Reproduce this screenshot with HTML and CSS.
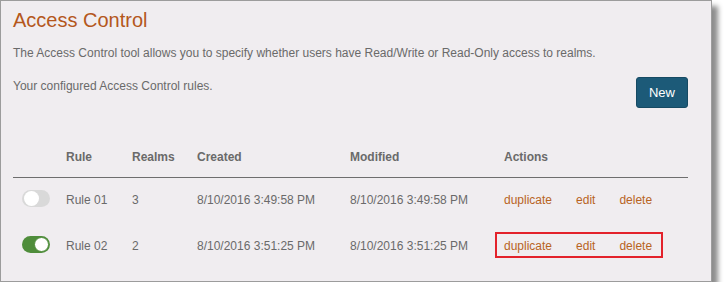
FILE: index.html
```html
<!DOCTYPE html>
<html lang="en">
<head>
  <meta charset="UTF-8">
  <title>Access Control</title>
  <link rel="stylesheet" href="styles.css">
</head>
<body>
  <div class="panel">
    <h1>Access Control</h1>
    <p class="intro">The Access Control tool allows you to specify whether users have Read/Write or Read-Only access to realms.</p>
    <div class="toolbar">
      <p>Your configured Access Control rules.</p>
      <button class="btn-new">New</button>
    </div>

    <div class="rules">
      <div class="row head">
        <div></div>
        <div>Rule</div>
        <div>Realms</div>
        <div>Created</div>
        <div>Modified</div>
        <div>Actions</div>
      </div>
      <div class="row">
        <div><span class="toggle"></span></div>
        <div>Rule 01</div>
        <div>3</div>
        <div>8/10/2016 3:49:58 PM</div>
        <div>8/10/2016 3:49:58 PM</div>
        <div class="actions">
          <a href="#">duplicate</a>
          <a href="#">edit</a>
          <a href="#">delete</a>
        </div>
      </div>
      <div class="row">
        <div><span class="toggle on"></span></div>
        <div>Rule 02</div>
        <div>2</div>
        <div>8/10/2016 3:51:25 PM</div>
        <div>8/10/2016 3:51:25 PM</div>
        <div class="actions marked">
          <a href="#">duplicate</a>
          <a href="#">edit</a>
          <a href="#">delete</a>
        </div>
      </div>
    </div>
  </div>
</body>
</html>
```

FILE: styles.css
```css
body {
  margin: 0;
  background: #fff;
  font-family: "Liberation Sans", Arial, sans-serif;
  font-size: 12px;
  line-height: 18px;
  color: #6a6a6a;
}
.panel {
  box-sizing: border-box;
  width: 712px;
  height: 282px;
  padding: 7px 23px 0 12px;
  background: #f0edf0;
  border: 1px solid #9c9c9c;
  box-shadow: 6px 6px 5px rgba(0, 0, 0, 0.45);
}
h1 {
  margin: 0;
  font-size: 20px;
  line-height: 24px;
  font-weight: normal;
  color: #b4571c;
}
p {
  margin: 0;
}
.intro {
  margin-top: 12px;
}
.toolbar {
  display: flex;
  justify-content: space-between;
  align-items: flex-start;
  margin-top: 15px;
}
.btn-new {
  width: 52px;
  height: 31px;
  padding: 0;
  border: 1px solid #164a63;
  border-radius: 3px;
  background: #1c5a78;
  color: #fff;
  font-family: inherit;
  font-size: 13px;
  cursor: pointer;
}
.rules {
  margin-top: 40px;
}
.row {
  display: grid;
  grid-template-columns: 53px 66px 65px 153px 154px 1fr;
  height: 46px;
  box-sizing: border-box;
  padding-top: 13px;
}
.row.head {
  height: auto;
  padding: 0 0 11px;
  border-bottom: 1px solid #6e6e6e;
  font-weight: bold;
}
.toggle {
  display: block;
  position: relative;
  width: 28px;
  height: 17px;
  margin: -1px 0 0 9px;
  border-radius: 9px;
  background: #d9d9d9;
}
.toggle::after {
  content: "";
  position: absolute;
  top: 1px;
  left: 2px;
  width: 15px;
  height: 15px;
  border-radius: 50%;
  background: #fff;
}
.toggle.on {
  background: #4f8d3b;
}
.toggle.on::after {
  left: auto;
  right: 1px;
  box-sizing: border-box;
  border: 1px solid #4f8d3b;
}
.actions {
  position: relative;
  display: flex;
  gap: 24px;
}
.actions a {
  color: #b8641f;
  text-decoration: none;
}
.actions.marked::after {
  content: "";
  position: absolute;
  left: -9px;
  top: -5px;
  width: 168px;
  height: 26px;
  box-sizing: border-box;
  border: 2px solid #e3222b;
}
```
